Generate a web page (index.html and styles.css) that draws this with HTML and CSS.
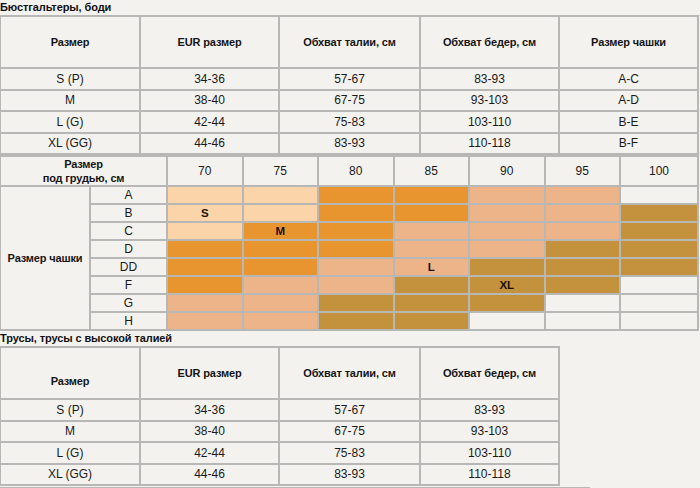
FILE: index.html
```html
<!DOCTYPE html>
<html lang="ru">
<head>
<meta charset="utf-8">
<link rel="stylesheet" href="styles.css">
</head>
<body>
<h2 class="title">Бюстгальтеры, боди</h2>
<table class="sizes wide">
  <colgroup><col class="c1"><col class="c2"><col class="c3"><col class="c4"><col class="c5"></colgroup>
  <tr class="head"><th>Размер</th><th>EUR размер</th><th>Обхват талии, см</th><th>Обхват бедер, см</th><th>Размер чашки</th></tr>
  <tr><td>S (P)</td><td>34-36</td><td>57-67</td><td>83-93</td><td>A-C</td></tr>
  <tr><td>M</td><td>38-40</td><td>67-75</td><td>93-103</td><td>A-D</td></tr>
  <tr><td>L (G)</td><td>42-44</td><td>75-83</td><td>103-110</td><td>B-E</td></tr>
  <tr><td>XL (GG)</td><td>44-46</td><td>83-93</td><td>110-118</td><td>B-F</td></tr>
</table>
<table class="grid">
  <colgroup><col class="g1"><col class="g2"><col class="gc"><col class="gc"><col class="gc"><col class="gc"><col class="gc"><col class="gc"><col class="gl"></colgroup>
  <tr class="ghead"><th colspan="2">Размер<br>под грудью, см</th><td>70</td><td>75</td><td>80</td><td>85</td><td>90</td><td>95</td><td>100</td></tr>
  <tr><th rowspan="8" class="cup">Размер чашки</th><td>A</td><td class="p"></td><td class="p"></td><td class="o"></td><td class="o"></td><td class="s"></td><td class="s"></td><td></td></tr>
  <tr><td>B</td><td class="p b">S</td><td class="p"></td><td class="o"></td><td class="o"></td><td class="s"></td><td class="s"></td><td class="br"></td></tr>
  <tr><td>C</td><td class="p"></td><td class="o b">M</td><td class="o"></td><td class="s"></td><td class="s"></td><td class="s"></td><td class="br"></td></tr>
  <tr><td>D</td><td class="o"></td><td class="o"></td><td class="o"></td><td class="s"></td><td class="s"></td><td class="br"></td><td class="br"></td></tr>
  <tr><td>DD</td><td class="o"></td><td class="o"></td><td class="s"></td><td class="s b">L</td><td class="br"></td><td class="br"></td><td class="br"></td></tr>
  <tr><td>F</td><td class="o"></td><td class="s"></td><td class="s"></td><td class="br"></td><td class="br b">XL</td><td class="br"></td><td></td></tr>
  <tr><td>G</td><td class="s"></td><td class="s"></td><td class="br"></td><td class="br"></td><td class="br"></td><td></td><td></td></tr>
  <tr><td>H</td><td class="s"></td><td class="s"></td><td class="br"></td><td class="br"></td><td></td><td></td><td></td></tr>
</table>
<h2 class="title t2">Трусы, трусы с высокой талией</h2>
<table class="sizes narrow">
  <colgroup><col class="c1"><col class="c2"><col class="c3"><col class="c4"></colgroup>
  <tr class="head"><th class="low">Размер</th><th>EUR размер</th><th>Обхват талии, см</th><th>Обхват бедер, см</th></tr>
  <tr><td>S (P)</td><td>34-36</td><td>57-67</td><td>83-93</td></tr>
  <tr><td>M</td><td>38-40</td><td>67-75</td><td>93-103</td></tr>
  <tr><td>L (G)</td><td>42-44</td><td>75-83</td><td>103-110</td></tr>
  <tr><td>XL (GG)</td><td>44-46</td><td>83-93</td><td>110-118</td></tr>
</table>
<div class="next"></div>
</body>
</html>
```
FILE: styles.css
```css
html, body {
  margin: 0;
  padding: 0;
  background: #f4f2ef;
  font-family: "Liberation Sans", Arial, sans-serif;
  color: #1a1a1a;
  overflow: hidden;
}
.title {
  margin: 0;
  height: 15px;
  font-size: 11px;
  line-height: 15px;
  font-weight: bold;
  letter-spacing: -0.1px;
  color: #111;
  white-space: nowrap;
}
.t2 {
  height: 15px;
  line-height: 14px;
}
table {
  border-collapse: collapse;
  table-layout: fixed;
  margin-left: -1px;
  background: #f4f2ef;
}
td, th {
  border: 2px solid #b7b7b5;
  padding: 0;
  text-align: center;
  vertical-align: middle;
  font-size: 12px;
  overflow: hidden;
  white-space: nowrap;
}
th {
  font-weight: bold;
  font-size: 11px;
  letter-spacing: -0.15px;
  color: #151515;
}
.sizes.wide { width: 698px; }
.sizes.narrow { width: 560px; }
.sizes .c1 { width: 140px; }
.sizes .c2 { width: 139px; }
.sizes .c3 { width: 141px; }
.sizes .c4 { width: 139px; }
.sizes .c5 { width: 139px; }
.sizes tr { height: 21.5px; }
.sizes tr.head { height: 52px; }
.sizes th.low { padding-top: 15px; }

.grid {
  width: 698px;
}
.grid .g1 { width: 90px; }
.grid .g2 { width: 77px; }
.grid .gc { width: 75.5px; }
.grid .gl { width: 78px; }
.grid tr { height: 18px; }
.grid td { font-size: 12px; line-height: 14px; }
.grid tr.ghead { height: 30px; }
.grid tr.ghead th { line-height: 14px; }
.grid .p { background: #fbd4aa; }
.grid .o { background: #e8942f; }
.grid .s { background: #edb48a; }
.grid .br { background: #c4913d; }
.grid .b { font-weight: bold; font-size: 11.5px; color: #1a1208; }
.next {
  width: 590px;
  height: 0;
  border-top: 2px solid #b7b7b5;
  margin-top: 1px;
}
```
